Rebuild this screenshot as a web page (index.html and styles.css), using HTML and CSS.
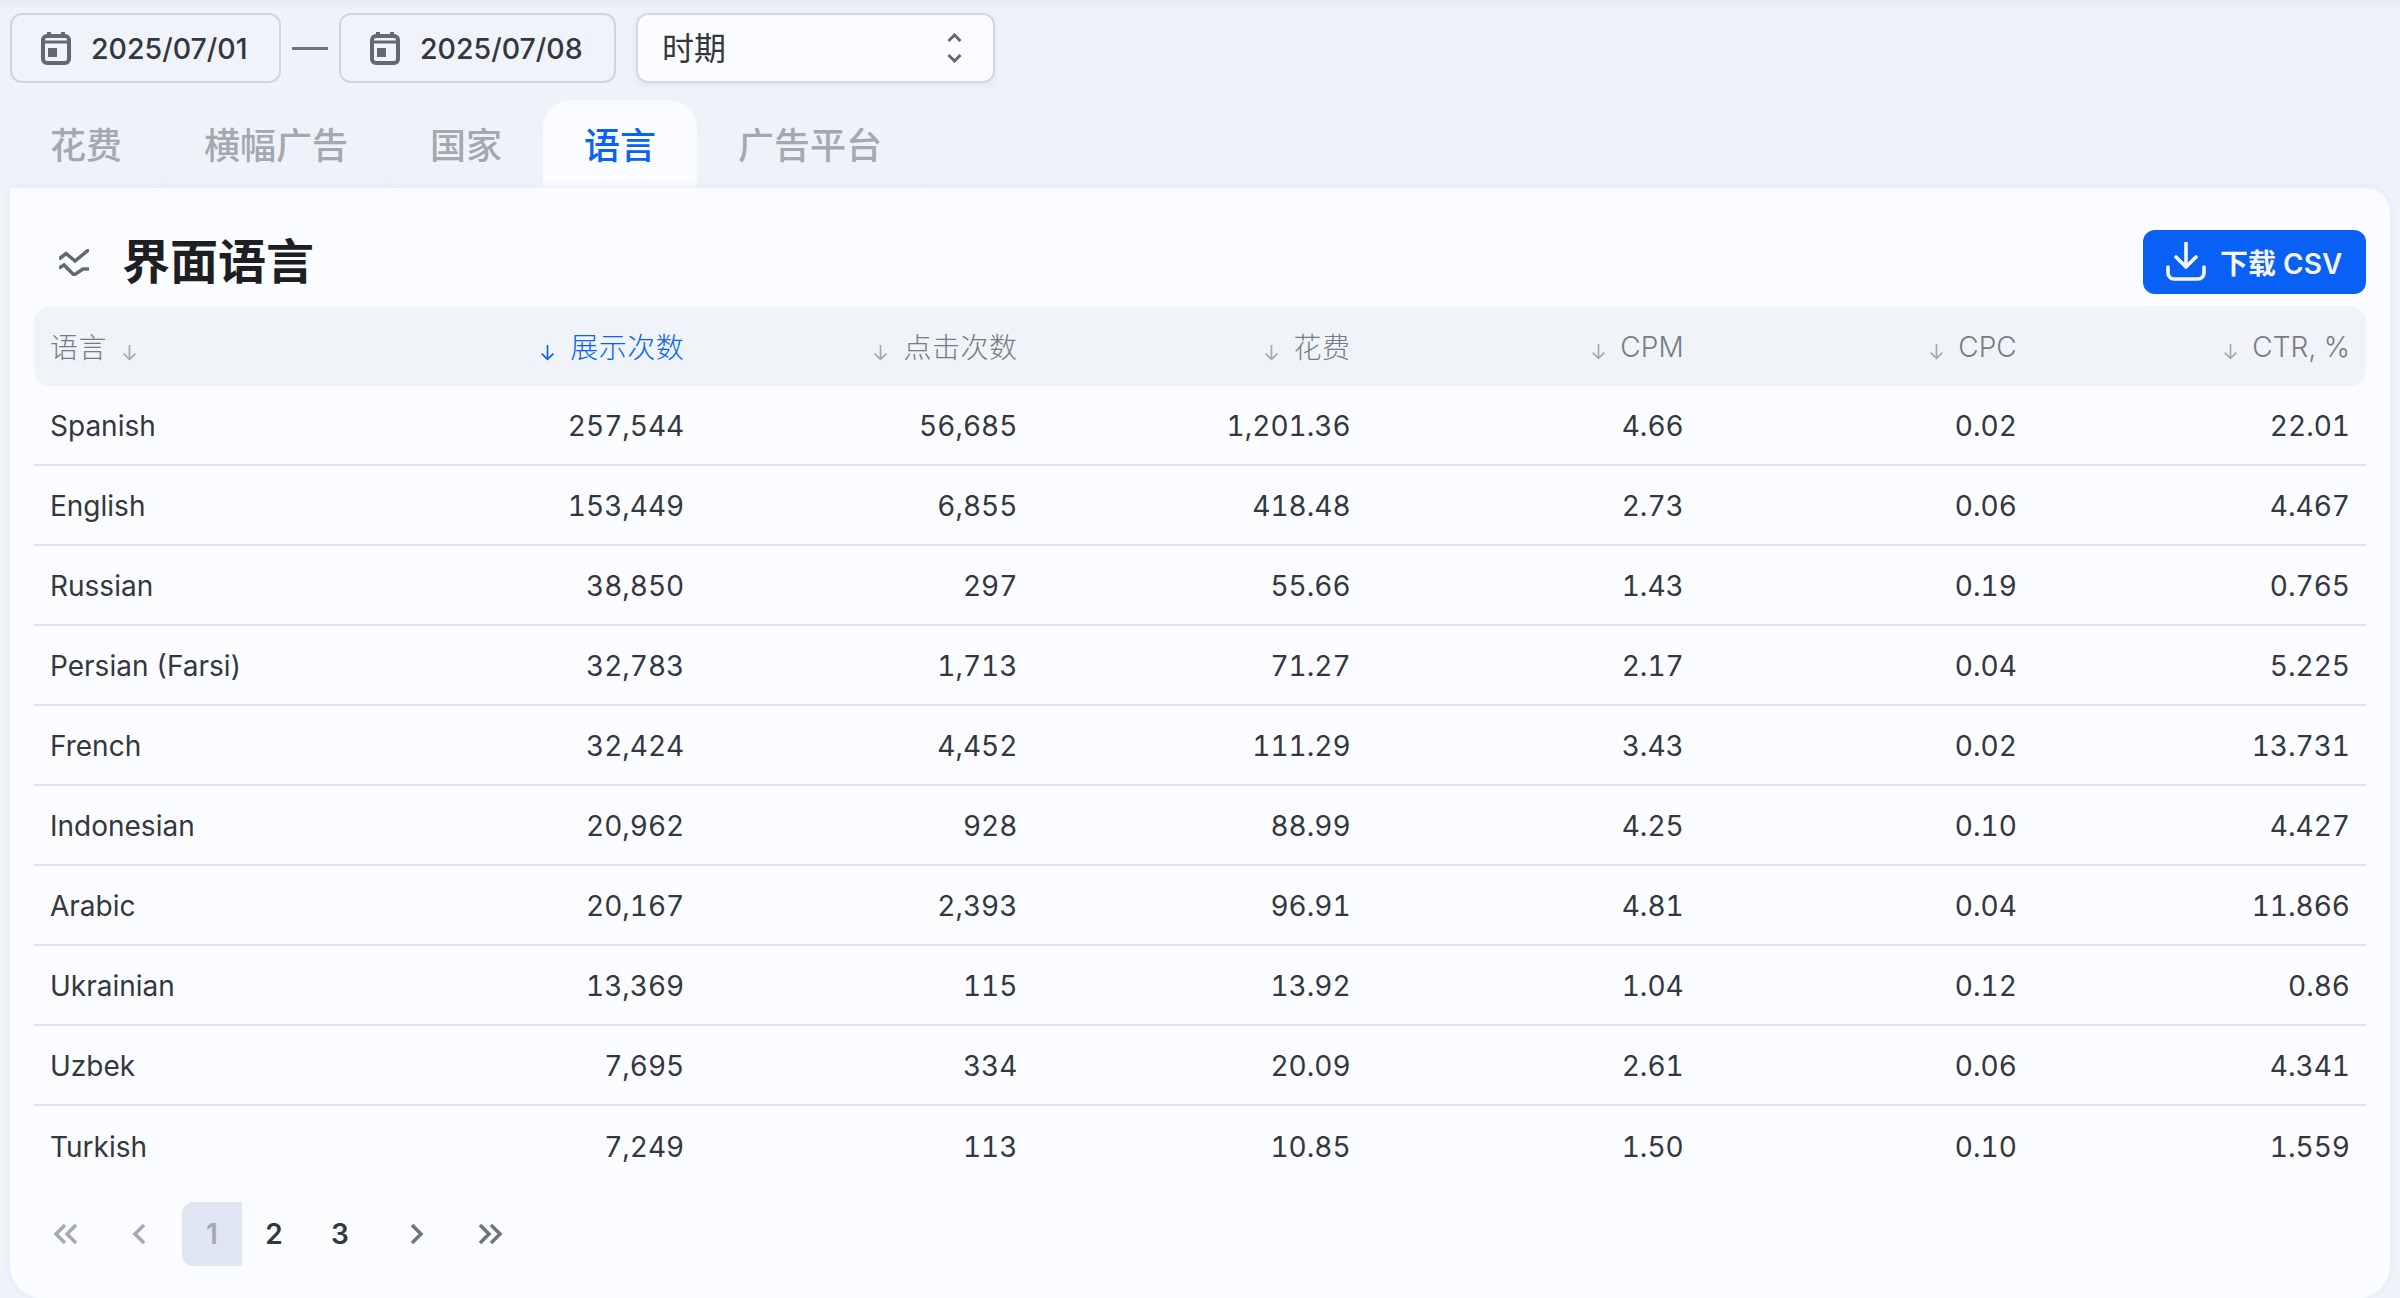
FILE: index.html
```html
<!DOCTYPE html>
<html lang="zh-CN">
<head>
  <meta charset="UTF-8" />
  <title>界面语言</title>
  <link rel="stylesheet" href="styles.css">
</head>
<body>
  <svg class="defs" width="0" height="0">
    <symbol id="i-cal" viewBox="0 0 30 34">
      <path d="M8 1v6M22 1v6" fill="none" stroke="currentColor" stroke-width="4"/>
      <rect x="2" y="5" width="26" height="27" rx="4" fill="none" stroke="currentColor" stroke-width="4"/>
      <path d="M2 11h26" stroke="currentColor" stroke-width="3"/>
      <rect x="7" y="17" width="9" height="9" fill="currentColor"/>
    </symbol>
    <symbol id="i-down" viewBox="0 0 16 16">
      <path d="M8 1v13M2.500 9 8 14.500 13.500 9" fill="none" stroke="currentColor" stroke-width="1.600"/>
    </symbol>
  </svg>

  <div class="filters">
    <button class="date-btn date-from">
      <svg class="cal"><use href="#i-cal"/></svg>
      <span>2025/07/01</span>
    </button>
    <span class="dash"></span>
    <button class="date-btn date-to">
      <svg class="cal"><use href="#i-cal"/></svg>
      <span>2025/07/08</span>
    </button>
    <div class="period">
      <span>时期</span>
      <svg class="updown" viewBox="0 0 16 30">
        <path d="M2 8 8 2l6 6M2 22l6 6 6-6" fill="none" stroke="currentColor" stroke-width="3"/>
      </svg>
    </div>
  </div>

  <nav class="tabs">
    <a class="tab">花费</a>
    <a class="tab">横幅广告</a>
    <a class="tab">国家</a>
    <a class="tab active">语言</a>
    <a class="tab">广告平台</a>
  </nav>

  <main class="card">
    <div class="card-head">
      <div class="card-title">
        <svg class="title-icon" viewBox="0 0 30 27">
          <path d="M0 10 7 4.500 16 12 30 0.500" fill="none" stroke="currentColor" stroke-width="3.500"/>
          <path d="M0 19 5 16 15 26 24 20H30" fill="none" stroke="currentColor" stroke-width="3.500"/>
        </svg>
        <h1>界面语言</h1>
      </div>
      <button class="csv-btn">
        <svg class="csv-icon" viewBox="0 0 40 40">
          <path d="M20 1v23M10 15l10 10 10-10" fill="none" stroke="currentColor" stroke-width="3.600" stroke-linecap="round" stroke-linejoin="round"/>
          <path d="M2 25v6a6 6 0 0 0 6 6h24a6 6 0 0 0 6-6v-6" fill="none" stroke="currentColor" stroke-width="3.600" stroke-linecap="round"/>
        </svg>
        <span>下载 CSV</span>
      </button>
    </div>

    <table class="stats">
      <thead>
        <tr>
          <th class="name">语言 <svg class="sort"><use href="#i-down"/></svg></th>
          <th class="sorted"><svg class="sort"><use href="#i-down"/></svg> 展示次数</th>
          <th><svg class="sort"><use href="#i-down"/></svg> 点击次数</th>
          <th><svg class="sort"><use href="#i-down"/></svg> 花费</th>
          <th class="en"><svg class="sort"><use href="#i-down"/></svg> CPM</th>
          <th class="en"><svg class="sort"><use href="#i-down"/></svg> CPC</th>
          <th class="en"><svg class="sort"><use href="#i-down"/></svg> CTR, %</th>
        </tr>
      </thead>
      <tbody>
        <tr><td class="name">Spanish</td><td>257,544</td><td>56,685</td><td>1,201.36</td><td>4.66</td><td>0.02</td><td>22.01</td></tr>
        <tr><td class="name">English</td><td>153,449</td><td>6,855</td><td>418.48</td><td>2.73</td><td>0.06</td><td>4.467</td></tr>
        <tr><td class="name">Russian</td><td>38,850</td><td>297</td><td>55.66</td><td>1.43</td><td>0.19</td><td>0.765</td></tr>
        <tr><td class="name">Persian (Farsi)</td><td>32,783</td><td>1,713</td><td>71.27</td><td>2.17</td><td>0.04</td><td>5.225</td></tr>
        <tr><td class="name">French</td><td>32,424</td><td>4,452</td><td>111.29</td><td>3.43</td><td>0.02</td><td>13.731</td></tr>
        <tr><td class="name">Indonesian</td><td>20,962</td><td>928</td><td>88.99</td><td>4.25</td><td>0.10</td><td>4.427</td></tr>
        <tr><td class="name">Arabic</td><td>20,167</td><td>2,393</td><td>96.91</td><td>4.81</td><td>0.04</td><td>11.866</td></tr>
        <tr><td class="name">Ukrainian</td><td>13,369</td><td>115</td><td>13.92</td><td>1.04</td><td>0.12</td><td>0.86</td></tr>
        <tr><td class="name">Uzbek</td><td>7,695</td><td>334</td><td>20.09</td><td>2.61</td><td>0.06</td><td>4.341</td></tr>
        <tr><td class="name">Turkish</td><td>7,249</td><td>113</td><td>10.85</td><td>1.50</td><td>0.10</td><td>1.559</td></tr>
      </tbody>
    </table>

    <div class="pager">
      <a class="pg-arrow off"><svg viewBox="0 0 26 22"><path d="M12 2 3 11l9 9M23 2l-9 9 9 9" /></svg></a>
      <a class="pg-arrow off"><svg viewBox="0 0 26 22"><path d="M17 2 8 11l9 9" /></svg></a>
      <a class="pg-num current">1</a>
      <a class="pg-num">2</a>
      <a class="pg-num">3</a>
      <a class="pg-arrow next"><svg viewBox="0 0 26 22"><path d="m9 2 9 9-9 9" /></svg></a>
      <a class="pg-arrow"><svg viewBox="0 0 26 22"><path d="m3 2 9 9-9 9M14 2l9 9-9 9" /></svg></a>
    </div>
  </main>
</body>
</html>
```

FILE: styles.css
```css
/* RESET */
* {
  margin: 0;
  padding: 0;
  box-sizing: border-box;
}

html, body {
  width: 100%;
  height: 100%;
}

body {
  height: 1298px;
  overflow: hidden;
  background: linear-gradient(#e4eaf7 0, #eff3f9 10px);
  font-family: Inter, "Noto Sans CJK SC", sans-serif;
  color: #33373e;
}

.defs {
  position: absolute;
}

/* FILTERS */
.filters {
  display: flex;
  align-items: center;
  height: 70px;
  margin: 13px 0 17px 10px;
}

.date-btn {
  display: flex;
  align-items: center;
  gap: 20px;
  height: 70px;
  padding-left: 29px;
  background-color: #f0f3f9;
  border: 2px solid #cfd4de;
  border-radius: 12px;
  font: 500 28.500px Inter, sans-serif;
  color: #33373e;
}
.date-from {
  width: 271px;
}
.date-to {
  width: 277px;
}

.cal {
  width: 30px;
  height: 34px;
  color: #646871;
}

.dash {
  width: 36px;
  height: 3px;
  margin: 0 11px 0 11px;
  background-color: #6f737b;
}

.period {
  display: flex;
  align-items: center;
  justify-content: space-between;
  width: 359px;
  height: 70px;
  margin-left: 20px;
  padding: 0 30px 4px 24px;
  background-color: #fbfcff;
  border: 2px solid #d3d8e2;
  border-radius: 12px;
  box-shadow: 0 2px 6px rgba(170,180,200,0.25);
  font-size: 32px;
}

.updown {
  width: 17px;
  height: 30px;
  margin-top: 4px;
  color: #646871;
}

/* TABS */
.tabs {
  display: flex;
  gap: 2px;
  height: 88px;
  margin-left: 10px;
}

.tab {
  display: flex;
  align-items: center;
  justify-content: center;
  padding: 0 40px 3px;
  border-radius: 28px 28px 0 0;
  font-size: 36px;
  font-weight: 500;
  color: #a4a8b0;
  box-shadow: 0 4px 6px rgba(230,236,248,0.3);
}
.tab.active {
  margin: 0 -1px 0 -1px;
  padding: 0 41px 3px;
  background-color: #fbfcff;
  color: #0a62f5;
  box-shadow: none;
}

/* CARD */
.card {
  display: flex;
  flex-direction: column;
  width: 2380px;
  height: 1110px;
  margin-left: 10px;
  padding: 42px 24px 0;
  background-color: #fbfcff;
  border-radius: 0 24px 32px 32px;
  box-shadow: 0 0 10px #dfe7f6;
  position: relative;
}

.card-head {
  display: flex;
  align-items: center;
  justify-content: space-between;
  height: 64px;
  margin-bottom: 12px;
}

.card-title {
  display: flex;
  align-items: center;
  gap: 33px;
  padding-left: 25px;
}
.card-title h1 {
  font-size: 48px;
  font-weight: 700;
  line-height: 64px;
  color: #1d1f23;
}

.title-icon {
  width: 30px;
  height: 27px;
  color: #646871;
}

.csv-btn {
  display: flex;
  align-items: center;
  gap: 14px;
  width: 223px;
  height: 64px;
  padding-left: 23px;
  background-color: #0860f5;
  border: none;
  border-radius: 12px;
  font: 600 28px Inter, "Noto Sans CJK SC", sans-serif;
  color: #f4f6fb;
}

.csv-icon {
  width: 40px;
  height: 40px;
}

/* TABLE */
.stats {
  width: 100%;
  table-layout: fixed;
  border-collapse: separate;
  border-spacing: 0;
  font-size: 28px;
  letter-spacing: 0.5px;
  font-variant-numeric: tabular-nums;
}

.stats th {
  height: 80px;
  padding: 0 16px;
  text-align: right;
  font-weight: 300;
  color: #777c84;
  background-color: #f0f3f8;
}
.stats th:first-child {
  border-radius: 16px 0 0 16px;
}
.stats th:last-child {
  border-radius: 0 16px 16px 0;
}
.stats th.name,
.stats td.name {
  text-align: left;
}
.stats th.sorted {
  color: #0a62f5;
}
.stats th.en {
  padding-top: 2px;
  letter-spacing: 0.1px;
}

.sort {
  width: 17px;
  height: 17px;
  margin: 0 6px;
  vertical-align: -3px;
  color: #a5a8ae;
}
.sorted .sort {
  color: #0a62f5;
}

.stats td {
  height: 80px;
  padding: 2px 16px 0;
  text-align: right;
  letter-spacing: 0;
  border-bottom: 2px solid #dfe2e7;
}
.stats tr:last-child td {
  border-bottom: none;
}

/* PAGER */
.pager {
  display: flex;
  align-items: center;
  height: 64px;
  margin: 16px 0 0 -5px;
}

.pg-arrow {
  display: flex;
  align-items: center;
  justify-content: center;
  width: 74px;
  height: 64px;
  color: #6f737b;
}
.pg-arrow.next {
  margin-left: 6px;
}
.pg-arrow svg {
  width: 26px;
  height: 22px;
  fill: none;
  stroke: currentColor;
  stroke-width: 3.500;
}
.pg-arrow.off {
  color: #a4a8b0;
}

.pg-num {
  display: flex;
  align-items: center;
  justify-content: center;
  width: 66px;
  height: 64px;
  font-size: 28px;
  font-weight: 600;
}
.pg-num.current {
  width: 60px;
  margin: 0 -1px 0 5px;
  background-color: #e0e6f1;
  border-radius: 12px 0 0 12px;
  color: #a4a8b0;
}
```
